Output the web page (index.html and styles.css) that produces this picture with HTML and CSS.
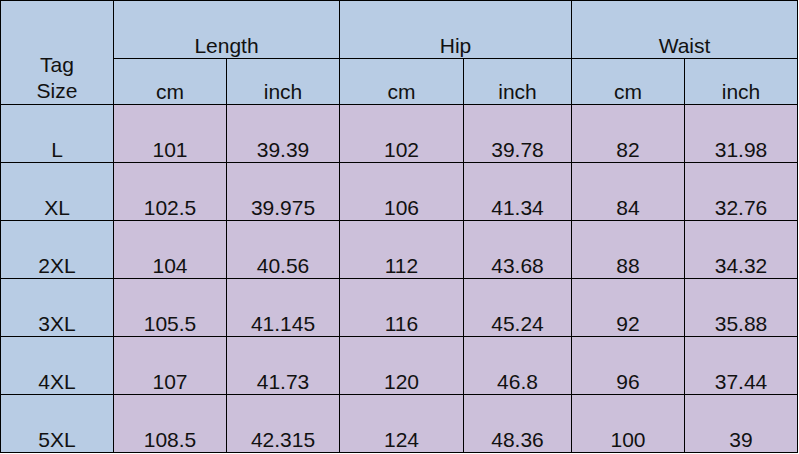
FILE: index.html
```html
<!DOCTYPE html>
<html>
<head>
<meta charset="utf-8">
<link rel="stylesheet" href="styles.css">
</head>
<body>
<div class="sheet">
  <div class="cell head tag">Tag<br>Size</div>
  <div class="cell head span2">Length</div>
  <div class="cell head span2">Hip</div>
  <div class="cell head span2">Waist</div>
  <div class="cell head">cm</div>
  <div class="cell head">inch</div>
  <div class="cell head">cm</div>
  <div class="cell head">inch</div>
  <div class="cell head">cm</div>
  <div class="cell head">inch</div>

  <div class="cell head">L</div>
  <div class="cell data">101</div><div class="cell data">39.39</div>
  <div class="cell data">102</div><div class="cell data">39.78</div>
  <div class="cell data">82</div><div class="cell data">31.98</div>

  <div class="cell head">XL</div>
  <div class="cell data">102.5</div><div class="cell data">39.975</div>
  <div class="cell data">106</div><div class="cell data">41.34</div>
  <div class="cell data">84</div><div class="cell data">32.76</div>

  <div class="cell head">2XL</div>
  <div class="cell data">104</div><div class="cell data">40.56</div>
  <div class="cell data">112</div><div class="cell data">43.68</div>
  <div class="cell data">88</div><div class="cell data">34.32</div>

  <div class="cell head">3XL</div>
  <div class="cell data">105.5</div><div class="cell data">41.145</div>
  <div class="cell data">116</div><div class="cell data">45.24</div>
  <div class="cell data">92</div><div class="cell data">35.88</div>

  <div class="cell head">4XL</div>
  <div class="cell data">107</div><div class="cell data">41.73</div>
  <div class="cell data">120</div><div class="cell data">46.8</div>
  <div class="cell data">96</div><div class="cell data">37.44</div>

  <div class="cell head">5XL</div>
  <div class="cell data">108.5</div><div class="cell data">42.315</div>
  <div class="cell data">124</div><div class="cell data">48.36</div>
  <div class="cell data">100</div><div class="cell data">39</div>
</div>
</body>
</html>
```
FILE: styles.css
```css
html, body {
  margin: 0;
  padding: 0;
  background: #ffffff;
}
.sheet {
  display: grid;
  grid-template-columns: 112px 112px 112px 123px 107px 112px 112px;
  grid-template-rows: 57px 45px repeat(6, 57px);
  gap: 1px;
  padding: 1px;
  background: #000000;
  width: max-content;
  font-family: "Liberation Sans", Arial, sans-serif;
  font-size: 21px;
  line-height: 24px;
  color: #111111;
}
.cell {
  display: flex;
  align-items: flex-end;
  justify-content: center;
  text-align: center;
}
.head {
  background: #b8cce4;
}
.data {
  background: #ccc0da;
}
.tag {
  grid-row: span 2;
  line-height: 26px;
}
.span2 {
  grid-column: span 2;
}
```
